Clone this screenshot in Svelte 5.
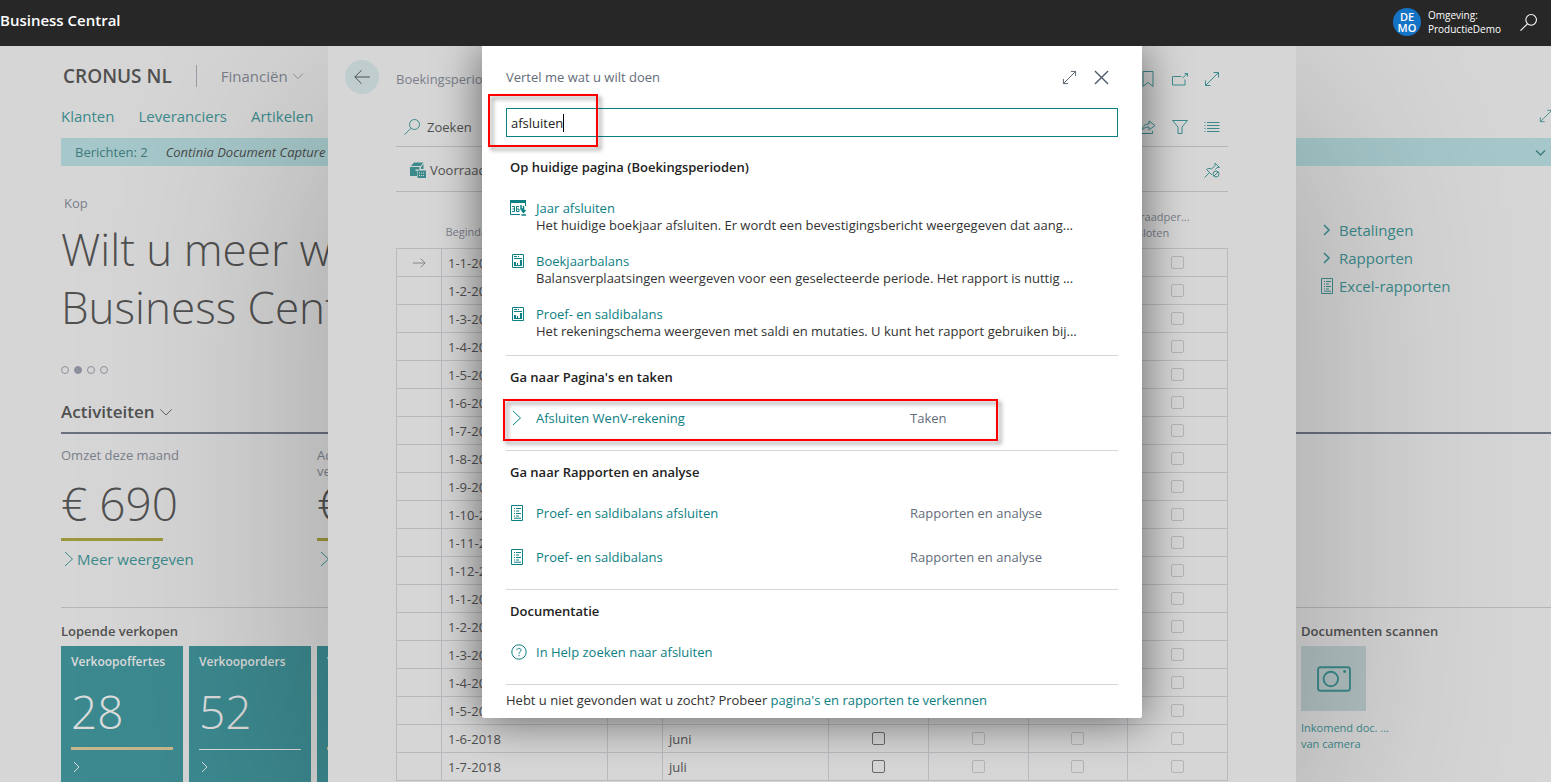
<script lang="ts">
  type Result = { title: string; kind: string; icon: string };

  const actions = [
    { title: 'Jaar afsluiten', icon: 'year', text: 'Het huidige boekjaar afsluiten. Er wordt een bevestigingsbericht weergegeven dat aang...' },
    { title: 'Boekjaarbalans', icon: 'chart', text: 'Balansverplaatsingen weergeven voor een geselecteerde periode. Het rapport is nuttig ...' },
    { title: 'Proef- en saldibalans', icon: 'chart', text: 'Het rekeningschema weergeven met saldi en mutaties. U kunt het rapport gebruiken bij...' },
  ];
  const tasks: Result[] = [{ title: 'Afsluiten WenV-rekening', kind: 'Taken', icon: 'chevron' }];
  const reports: Result[] = [
    { title: 'Proef- en saldibalans afsluiten', kind: 'Rapporten en analyse', icon: 'report' },
    { title: 'Proef- en saldibalans', kind: 'Rapporten en analyse', icon: 'report' },
  ];

  const months = ['januari', 'februari', 'maart', 'april', 'mei', 'juni', 'juli', 'augustus', 'september', 'oktober', 'november', 'december'];
  const periods = Array.from({ length: 19 }, (_, i) => ({
    start: `1-${(i % 12) + 1}-${i < 12 ? 2017 : 2018}`,
    name: months[i % 12],
  }));

  let query = $state('afsluiten');
</script>

{#snippet icon(name: string)}
  <svg class="icon" viewBox="0 0 16 16" aria-hidden="true">
    {#if name === 'expand'}
      <path d="M1.5 14.5 14.5 1.5M9.5 1.5h5v5M1.5 9.5v5h5" />
    {:else if name === 'close'}
      <path d="M1 1l14 14M15 1 1 15" />
    {:else if name === 'search'}
      <circle cx="10.5" cy="5.5" r="5" /><path d="M7 9.2.5 15.7" />
    {:else if name === 'back'}
      <path d="M16 8H.8M7.5 1.3.8 8l6.7 6.7" />
    {:else if name === 'row'}
      <path d="M1 8h14M10 3 15 8l-5 5" />
    {:else if name === 'chevron'}
      <path d="M4 1l7.5 7L4 15" />
    {:else if name === 'small'}
      <path d="M5 3l5 5-5 5" />
    {:else if name === 'down'}
      <path d="M1.5 5 8 11.5 14.5 5" />
    {:else if name === 'bookmark'}
      <path d="M3 .5h10v15l-5-4-5 4z" />
    {:else if name === 'popout'}
      <path d="M9.5 5.5h-9v8.500h12.500V8.500M10.500 7l5-4.500M12.500 2.500h3V5.500" />
    {:else if name === 'share'}
      <path d="M1 9.500v5h11.500V12M2 11c.5-4 3-6 7-6V2l6 4.500-6 4.500V8c-3 0-5 .8-7 3z" />
    {:else if name === 'filter'}
      <path d="M.5 1.500h15L10 8v6.500H6V8z" />
    {:else if name === 'list'}
      <path d="M3 3.500h12.500M3 6.500h12.500M3 9.500h12.500M3 12.500h12.500M.5 3.500h1M.5 6.500h1M.5 9.500h1M.5 12.500h1" />
    {:else if name === 'unpin'}
      <path d="M.5 15.500 5.500 10.500M2.500 7.500l5.500 5.500M2.500 7.500c1.500-1.200 3.500-1.200 5-.5L11 3.500V1l4.500 4.500H13L11.500 7.500" />
      <circle cx="12" cy="12" r="3" /><path d="M10 14l4-4" />
    {:else if name === 'report'}
      <path d="M2.500.5h11v15h-11zM5 3.500h1M7 3.500h5M5 6h1M7 6h3M5 8.500h1M7 8.500h5M5 11h1M7 11h3M5 13.200h7" />
    {:else if name === 'chart'}
      <path d="M2.500 1.500h11v13h-11z" />
      <path class="fill" d="M4 3h3v1H4zM8 3h1v1H8zM4 5h8v1H4zM4 12h8v1H4zM4 9h2v4H4zM7 10h1v3H7zM10 7h2v6h-2z" />
    {:else if name === 'year'}
      <path class="fill" d="M0 0h16v3H0z" />
      <path d="M.5 3v11.500h9.500M15.500 3v3M2 6.500h2.500v5H2M2.500 9h2M9 6.500H6.500v5H9V9H6.500" />
      <path class="thick" d="M11 5v4h2.500M13.500 6v6M11.500 10 13.500 12.300l2-2.300M11.500 15h4.500" />
    {:else if name === 'inventory'}
      <path class="fill" d="M0 5h9.500v2.500H5.500V9h1.500v5H0zM1 4l3-3.500h9.500l-3 3.500zM11 5l2.500-3v5H11zM7.500 8.500H16V16H7.500z" />
      <path class="dots" d="M9 11h6M9 13.500h6" />
    {:else if name === 'help'}
      <circle cx="8" cy="8" r="7.200" /><path d="M5.800 6.200C6 3.600 10.200 3.800 10 6.300 9.900 7.700 8 7.900 8 9.700M8 11v1.300" />
    {:else if name === 'camera'}
      <rect x=".5" y="2.500" width="15" height="11" rx="1" /><circle cx="6.500" cy="8" r="3.400" /><circle class="fill" cx="13" cy="4.500" r=".7" />
    {/if}
  </svg>
{/snippet}

{#snippet resultRow(item: Result, marked: boolean)}
  <li class="result">
    {@render icon(item.icon)}
    <a href="#open">{item.title}</a>
    <span class="kind">{item.kind}</span>
    {#if marked}<span class="mark mark-row"></span>{/if}
  </li>
{/snippet}

<div class="app">
  <header class="topbar">
    <span class="product">Business Central</span>
    <div class="env">
      <span class="avatar">DE<br />MO</span>
      <span class="env-name">Omgeving:<br />ProductieDemo</span>
      <button class="bare" aria-label="Zoeken">{@render icon('search')}</button>
    </div>
  </header>

  <div class="stage">
    <main class="home">
      <div class="company">
        <h1>CRONUS NL</h1>
        <button class="bare role">Financiën {@render icon('down')}</button>
      </div>
      <nav class="areas">
        <a href="#klanten">Klanten</a>
        <a href="#leveranciers">Leveranciers</a>
        <a href="#artikelen">Artikelen</a>
        <button class="bare" aria-label="Uitvouwen">{@render icon('expand')}</button>
      </nav>
      <div class="banner">
        <span>Berichten: 2</span>
        <em>Continia Document Capture</em>
        {@render icon('down')}
      </div>

      <section class="split hero">
        <div>
          <p class="kop">Kop</p>
          <h2>Wilt u meer weten over<br />Business Central?</h2>
          <div class="pager"><i></i><i class="on"></i><i></i><i></i></div>
        </div>
        <ul class="quick">
          <li>{@render icon('small')}<a href="#betalingen">Betalingen</a></li>
          <li>{@render icon('small')}<a href="#rapporten">Rapporten</a></li>
          <li>{@render icon('report')}<a href="#excel">Excel-rapporten</a></li>
        </ul>
      </section>

      <h3 class="activities">Activiteiten {@render icon('down')}</h3>
      <section class="kpis">
        {#each [['Omzet deze maand', '€ 690'], ['Achterstallige verkoopfacturen', '€ 35']] as [label, amount]}
          <div class="kpi">
            <p>{label}</p>
            <strong>{amount}</strong>
            <a href="#meer">{@render icon('chevron')}Meer weergeven</a>
          </div>
        {/each}
      </section>

      <section class="split cues">
        <div>
          <h4>Lopende verkopen</h4>
          <div class="tiles">
            {#each [['Verkoopoffertes', 28], ['Verkooporders', 52], ['Verkoopfacturen', 14]] as [label, count], i}
              <a class="tile" class:plain={i === 1} href="#tile">
                <span>{label}</span>
                <b>{count}</b>
                <i></i>
                {@render icon('small')}
              </a>
            {/each}
          </div>
        </div>
        <div>
          <h4>Documenten scannen</h4>
          <a class="scan" href="#scan">
            <span class="scan-box">{@render icon('camera')}</span>
            Inkomend doc. ...<br />van camera
          </a>
        </div>
      </section>
    </main>

    <div class="layer">
      <section class="page">
        <div class="page-head">
          <button class="bare back" aria-label="Terug">{@render icon('back')}</button>
          <span class="page-title">Boekingsperioden</span>
          <div class="tools">
            {@render icon('bookmark')}
            {@render icon('popout')}
            {@render icon('expand')}
          </div>
        </div>
        <div class="page-body">
          <div class="bar">
            <button class="bare">{@render icon('search')} Zoeken</button>
            <div class="tools">
              {@render icon('share')}
              {@render icon('filter')}
              {@render icon('list')}
            </div>
          </div>
          <div class="bar second">
            <button class="bare">{@render icon('inventory')} Voorraadperiode</button>
            <div class="tools">{@render icon('unpin')}</div>
          </div>
          <table>
            <colgroup>
              <col class="c-mark" /><col class="c-date" /><col class="c-gap" /><col class="c-date" /><col /><col /><col /><col />
            </colgroup>
            <thead>
              <tr>
                <th></th><th class="date">Begindatum</th><th></th><th>Naam</th><th>Nieuw boekjaar</th>
                <th>Afgesloten</th><th>Datum geblokk.</th><th><span class="wide">Voorraadper...<br />afgesloten</span></th>
              </tr>
            </thead>
            <tbody>
              {#each periods as period, i}
                <tr>
                  <td class="mid">{#if i === 0}{@render icon('row')}{/if}</td>
                  <td>{period.start}</td>
                  <td></td>
                  <td>{period.name}</td>
                  <td class="mid"><input type="checkbox" aria-label="Nieuw boekjaar" /></td>
                  <td class="mid"><input type="checkbox" aria-label="Afgesloten" disabled /></td>
                  <td class="mid"><input type="checkbox" aria-label="Datum geblokkeerd" disabled /></td>
                  <td class="mid"><input type="checkbox" aria-label="Voorraadperiode afgesloten" disabled /></td>
                </tr>
              {/each}
            </tbody>
          </table>
        </div>
      </section>
    </div>

    <div class="layer">
      <div class="dialog" role="dialog" aria-label="Vertel me wat u wilt doen">
        <div class="dialog-head">
          <label for="tellme">Vertel me wat u wilt doen</label>
          <button class="bare" aria-label="Vergroten">{@render icon('expand')}</button>
          <button class="bare close" aria-label="Sluiten">{@render icon('close')}</button>
        </div>
        <div class="field">
          <input id="tellme" type="text" bind:value={query} />
          <span class="caret"><span>{query}</span></span>
          <span class="mark mark-field"></span>
        </div>

        <section class="group first">
          <h5>Op huidige pagina (Boekingsperioden)</h5>
          <ul>
            {#each actions as action}
              <li class="action">
                {@render icon(action.icon)}
                <div>
                  <a href="#open">{action.title}</a>
                  <p>{action.text}</p>
                </div>
              </li>
            {/each}
          </ul>
        </section>
        <section class="group">
          <h5>Ga naar Pagina's en taken</h5>
          <ul>{#each tasks as item}{@render resultRow(item, true)}{/each}</ul>
        </section>
        <section class="group">
          <h5>Ga naar Rapporten en analyse</h5>
          <ul>{#each reports as item}{@render resultRow(item, false)}{/each}</ul>
        </section>
        <section class="group">
          <h5>Documentatie</h5>
          <ul>
            <li class="result help">{@render icon('help')}<a href="#help">In Help zoeken naar {query}</a></li>
          </ul>
        </section>
        <p class="foot">Hebt u niet gevonden wat u zocht? Probeer <a href="#explore">pagina's en rapporten te verkennen</a></p>
      </div>
    </div>
  </div>
</div>

<style>
  :global(body) { background: #d6d6d6; overflow: hidden; }
  .app {
    display: flex;
    flex-direction: column;
    height: 100vh;
    overflow: hidden;
    font: 13px/20px "Open Sans", "Noto Sans", sans-serif;
    color: #505050;
  }
  h1, h2, h3, h4, h5, p, ul { margin: 0; padding: 0; font-weight: 400; }
  ul { list-style: none; }
  a { color: #3c8a8c; text-decoration: none; }
  .bare { display: flex; align-items: center; padding: 0; border: 0; background: none; font: inherit; color: inherit; }
  .icon { width: 16px; height: 16px; flex: none; fill: none; stroke: currentColor; overflow: visible; }
  .icon .fill { fill: currentColor; stroke: none; }
  .icon .thick { stroke-width: 1.5; }
  .icon .dots { stroke: #d6d6d6; stroke-dasharray: 1 1; }

  .topbar {
    display: flex;
    flex: none;
    justify-content: space-between;
    height: 46px;
    background: #272727;
    color: #fff;
  }
  .product { font-size: 15px; line-height: 40px; font-weight: 600; }
  .env { display: flex; align-items: center; padding: 0 14px 2px 0; }
  .avatar {
    width: 28px;
    height: 28px;
    padding-top: 3px;
    box-sizing: border-box;
    border-radius: 50%;
    background: #1573c5;
    font-size: 11px;
    line-height: 11px;
    font-weight: 600;
    text-align: center;
  }
  .env-name { width: 92px; padding-left: 7px; font-size: 10px; line-height: 14px; }
  .env .icon { width: 17px; height: 17px; }

  .stage { display: grid; grid-template: minmax(0, 1fr) / minmax(0, 1fr); flex: 1; min-height: 0; overflow: hidden; }
  .home, .layer { grid-area: 1 / 1; min-height: 0; overflow: hidden; }
  .layer { display: flex; justify-content: center; padding-left: 73px; }

  .home { padding-left: 61px; background: #d6d6d6; }
  .company { display: flex; align-items: center; height: 28px; padding: 16px 0 12px 2px; }
  h1 { font-size: 19px; font-weight: 600; padding-right: 24px; }
  .role { height: 22px; padding-left: 24px; gap: 4px; border-left: 1px solid #9a9ca6; color: #7a7f8a; font-size: 15px; }
  .role .icon { width: 12px; height: 12px; }
  .areas { display: flex; align-items: center; gap: 24px; height: 28px; padding-bottom: 8px; font-size: 15px; }
  .areas .bare { margin: 0 -2px 0 auto; color: #3c8a8c; }
  .areas .icon { width: 14px; height: 14px; }
  .banner { display: flex; align-items: center; gap: 18px; height: 28px; padding: 0 5px 0 14px; background: #a6c8ca; color: #3f7a7c; }
  .banner em { color: #4a4a4a; }
  .banner .icon { width: 11px; height: 11px; margin-left: auto; stroke-width: 2; }
  .split { display: grid; grid-template-columns: minmax(0, 1fr) 250px; }
  .hero { height: 218px; padding-top: 8px; }
  .kop { padding: 19px 3px 7px; color: #7a7f8a; }
  h2 { font-size: 44px; line-height: 58px; font-weight: 300; white-space: nowrap; }
  .pager { display: flex; gap: 5px; padding-top: 30px; }
  .pager i { width: 6px; height: 6px; border: 1px solid #8c909c; border-radius: 50%; }
  .pager .on { background: #8c909c; }
  .quick { padding: 42px 0 0 18px; font-size: 15px; line-height: 28px; }
  .quick li { display: flex; align-items: center; gap: 4px; color: #3c8a8c; }
  .quick li:not(:last-child) .icon { stroke-width: 1.5; }
  .activities {
    display: flex;
    align-items: center;
    gap: 4px;
    height: 40px;
    border-bottom: 2px solid #6b7080;
    font-size: 17px;
    font-weight: 600;
  }
  .activities .icon { width: 14px; height: 14px; }
  .kpis { display: grid; grid-template-columns: 256px 256px; height: 173px; border-bottom: 1px solid #b4b6ba; }
  .kpi p { width: 140px; height: 34px; padding-top: 13px; line-height: 16px; color: #7a7f8a; }
  .kpi strong { display: block; width: 102px; height: 57px; border-bottom: 3px solid #9c963c; font-size: 46px; line-height: 45px; font-weight: 300; white-space: nowrap; }
  .kpi a { display: flex; align-items: center; height: 36px; font-size: 15px; }
  h4 { padding-top: 14px; line-height: 18px; font-weight: 600; padding-bottom: 6px; }
  .tiles { display: flex; gap: 6px; }
  .tile { display: flex; flex-direction: column; width: 102px; height: 150px; padding: 6px 10px; background: #3c8a90; color: #dcdcdc; }
  .tile span { font-weight: 600; font-size: 12px; }
  .tile b { height: 70px; font-size: 46px; line-height: 78px; font-weight: 300; }
  .tile i { height: 3px; margin-top: 5px; background: #c9b78c; }
  .tile.plain i { height: 1px; margin-top: 7px; background: #dcdcdc; }
  .tile .icon { width: 16px; margin: 9px 0 0 -2px; }
  .scan { display: block; font-size: 11px; line-height: 16px; }
  .scan-box { display: grid; place-items: center; width: 65px; height: 65px; margin-bottom: 9px; background: #b2c1c2; }
  .scan-box .icon { width: 34px; height: 34px; stroke-width: 0.9; }

  .page {
    box-sizing: border-box;
    width: 968px;
    background: #d6d6d6;
    box-shadow: 0 60px 220px rgba(0, 0, 0, 0.26);
    overflow: hidden;
  }
  .page-head { display: flex; align-items: center; height: 34px; padding: 14px 76px 12px 17px; color: #7a7f8a; }
  .page-head .tools { padding-top: 4px; }
  .page-title { padding: 3px 0 0 17px; }
  .back { justify-content: center; width: 34px; height: 34px; border-radius: 50%; background: #bfcdcf; color: #505050; }
  .tools { display: flex; gap: 16px; margin-left: auto; color: #3c8a8c; }
  .page-body { padding: 0 68px; }
  .bar { display: flex; align-items: center; height: 38px; padding: 2px 8px 0; border-bottom: 1px solid #b4b6ba; }
  .bar .bare { gap: 7px; }
  .bar .bare .icon { color: #3c8a8c; }
  .bar.second { height: 42px; padding-left: 14px; }
  .second .bare { gap: 4px; }
  table { width: 100%; border-collapse: collapse; table-layout: fixed; }
  .c-mark { width: 45px; }
  .c-date { width: 166px; }
  .c-gap { width: 55px; }
  th { height: 49px; padding: 0 4px 7px; vertical-align: bottom; font-size: 11px; line-height: 16px; font-weight: 400; text-align: left; color: #7a7f8a; }
  th.date { line-height: 18px; }
  .wide { display: block; margin-left: -16px; }
  td { box-sizing: border-box; height: 28px; padding: 0 6px; border: 1px solid #b9bac0; line-height: 20px; }
  .mid { text-align: center; font-size: 0; line-height: 0; }
  td .icon { width: 14px; height: 14px; stroke: #7c7c7c; }
  td input { appearance: none; width: 13px; height: 13px; margin: 0; border: 1px solid #6a6a6a; border-radius: 2px; }
  td input:disabled { border-color: #b4b4b4; }

  .dialog {
    box-sizing: border-box;
    width: 660px;
    align-self: flex-start;
    padding: 20px 24px 8px;
    border-radius: 0 0 2px 2px;
    background: #fff;
    color: #333;
    box-shadow: 0 2px 46px rgba(0, 0, 0, 0.55);
  }
  .dialog a { color: #0c8083; }
  .dialog .icon { color: #0c8083; }
  .dialog-head { display: flex; align-items: center; height: 22px; margin-bottom: 20px; color: #646c7a; }
  .dialog-head label { flex: 1; }
  .dialog-head .icon { width: 15px; height: 15px; color: #505c6a; }
  .dialog-head .close { padding: 0 9px 0 17px; }
  .dialog-head .close .icon { stroke-width: 1.5; }
  .field { position: relative; }
  .field input {
    box-sizing: border-box;
    display: block;
    width: 100%;
    height: 29px;
    padding: 0 4px;
    border: 1px solid #0c8083;
    outline: 0;
    background: #fff;
    font: inherit;
    color: #222;
    caret-color: transparent;
  }
  .caret { position: absolute; inset: 6px auto 5px 5px; border-right: 1px solid #000; pointer-events: none; }
  .caret span { visibility: hidden; }
  .mark { position: absolute; border: 2px solid #f00; filter: drop-shadow(3px 3px 2px rgba(0, 0, 0, 0.45)); pointer-events: none; }
  .mark-field { inset: -14px auto -10px -18px; width: 106px; }
  .mark-row { inset: 3px 120px -1px -3px; }

  .group { padding: 11px 0 10px; border-bottom: 1px solid #d4d6d8; }
  .group.first { padding: 20px 0 5px; }
  h5 { padding: 0 4px 9px; font-size: 13px; font-weight: 600; line-height: 20px; color: #222; }
  .first h5 { padding-bottom: 14px; }
  .action { display: flex; gap: 10px; height: 34px; padding: 9px 4px 10px; line-height: 17px; white-space: nowrap; }
  .result { position: relative; display: flex; align-items: center; height: 44px; padding-left: 3px; }
  .result a { flex: 1; padding-left: 11px; }
  .result .kind { width: 208px; color: #646c7a; }
  .help { padding-left: 5px; }
  .help a { padding-left: 9px; }
  .foot { padding-top: 5px; }
</style>
